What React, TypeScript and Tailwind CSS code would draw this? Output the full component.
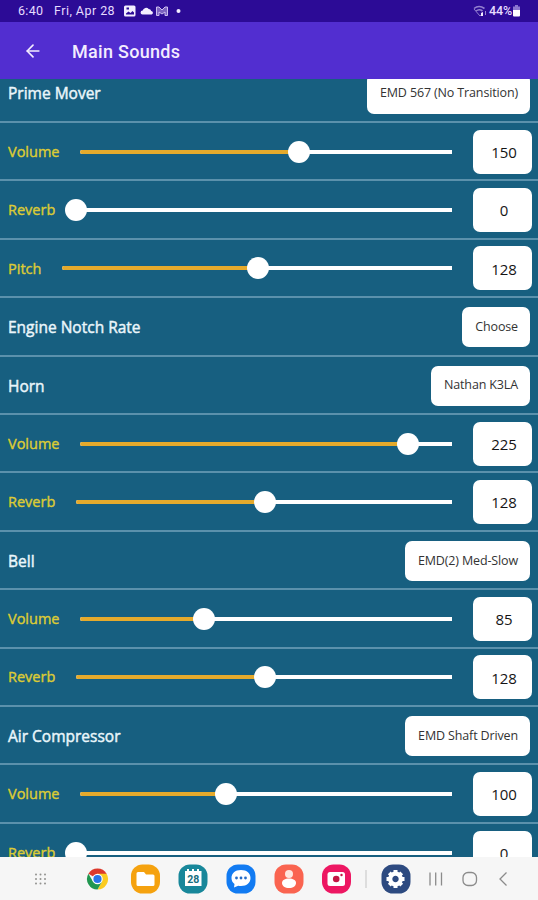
import { LuArrowLeft } from "react-icons/lu"

type Row =
  | { kind: "choice"; label: string; value: string }
  | { kind: "slider"; label: "Volume" | "Reverb" | "Pitch"; value: number }

const rows: Row[] = [
  { kind: "choice", label: "Prime Mover", value: "EMD 567 (No Transition)" },
  { kind: "slider", label: "Volume", value: 150 },
  { kind: "slider", label: "Reverb", value: 0 },
  { kind: "slider", label: "Pitch", value: 128 },
  { kind: "choice", label: "Engine Notch Rate", value: "Choose" },
  { kind: "choice", label: "Horn", value: "Nathan K3LA" },
  { kind: "slider", label: "Volume", value: 225 },
  { kind: "slider", label: "Reverb", value: 128 },
  { kind: "choice", label: "Bell", value: "EMD(2) Med-Slow" },
  { kind: "slider", label: "Volume", value: 85 },
  { kind: "slider", label: "Reverb", value: 128 },
  { kind: "choice", label: "Air Compressor", value: "EMD Shaft Driven" },
  { kind: "slider", label: "Volume", value: 100 },
  { kind: "slider", label: "Reverb", value: 0 },
]

const labelWidths = {
  Volume: "w-[72px]",
  Reverb: "w-[68px]",
  Pitch: "w-[54px]",
}

function ChoiceRow({ label, value }: { label: string; value: string }) {
  return (
    <div className="flex h-[58.43px] shrink-0 items-center justify-between border-b-2 border-[#5b91ac] px-2 pt-[2px]">
      <span className="pt-px text-[15.5px] text-[#eaf6fb] [-webkit-text-stroke:0.45px]">{label}</span>
      <button className="h-10 rounded-[7px] bg-white pr-3 pl-[13.3px] text-[12.5px] tracking-[-0.14px] text-[#333]">{value}</button>
    </div>
  )
}

function SliderRow({ label, value }: { label: keyof typeof labelWidths; value: number }) {
  const percent = (value / 255) * 100
  return (
    <div className="flex h-[58.43px] shrink-0 items-center border-b-2 border-[#5b91ac] pt-px pl-2 pr-1.5">
      <span className={`shrink-0 text-[14.5px] text-[#dccb35] [-webkit-text-stroke:0.4px] ${labelWidths[label]}`}>
        {label}
      </span>
      <div className="relative h-1 flex-1 rounded-r-[1px] rounded-l-full bg-white">
        <div className="h-1 rounded-full bg-[#e5aa2c]" style={{ width: `${percent}%` }} />
        <div
          className="absolute -top-[9px] size-[22px] -translate-x-1/2 rounded-full bg-white"
          style={{ left: `${percent}%` }}
        />
      </div>
      <div className="ml-[21px] flex h-11 w-[59px] items-center justify-center rounded-[7px] bg-white pt-px pl-[3px] text-[15px] text-[#151515]">
        {value}
      </div>
    </div>
  )
}

function StatusBar() {
  return (
    <div className="flex h-[22px] shrink-0 items-center bg-[#2c0b96] pl-[18px] pr-[17px] font-['Roboto',sans-serif] text-[12.5px] text-[#e6dcff]">
      <span className="w-9 pt-px tracking-[0.3px]">6:40</span>
      <span className="w-[70px] whitespace-nowrap pt-px tracking-[0.45px]">Fri, Apr 28</span>
      <svg width="60" height="12" viewBox="0 0 60 12" fill="#f3edff">
        <path fillRule="evenodd" d="M1.500 0.500h8.500a1.500 1.500 0 0 1 1.500 1.500v8a1.500 1.500 0 0 1-1.500 1.500H1.500A1.500 1.500 0 0 1 0 10V2A1.500 1.500 0 0 1 1.500 .5ZM2 9.500h8V7.500L8.500 6 6.500 8 4.500 6.500 2 8.500ZM2.500 2.500v2H5v-2Z" />
        <path d="M18.500 9.500a2 2 0 0 1 .2-4 3.500 3.500 0 0 1 6-1.500 2.600 2.600 0 0 1 2.500 2 1.800 1.800 0 0 1 .5 3.500Z" />
        <path d="M32.500 2v8.500h2.500V7l3 2 3-2v3.500h2.500V2H41l-3 3-3-3Z" fill="#7c63c0" stroke="#cdbff0" strokeWidth="1" />
        <circle cx="54.500" cy="6" r="2" />
      </svg>
      <svg className="ml-auto" width="14" height="12" viewBox="0 0 14 12" fill="none" stroke="#9480d0">
        <path d="M1 3.500Q6 -.5 11.500 3.500M3 6q3.200-2.600 6.500 0" strokeWidth="1.600" />
        <path d="M1 4l6 7 2-2" />
        <path d="M8 8l2-1v4H8Z" fill="#f3edff" stroke="none" />
        <path d="M12.500 6v4" />
      </svg>
      <span className="ml-[2px] pt-px font-medium tracking-[-0.1px]">44%</span>
      <svg width="9" height="12" viewBox="0 0 9 12">
        <path d="M3 0h3v1.500h2v4H1v-4h2Z" fill="#8c76cf" />
        <path d="M1 5h7v5.500a1 1 0 0 1-1 1H2a1 1 0 0 1-1-1Z" fill="#fff" />
      </svg>
    </div>
  )
}

function Dock() {
  return (
    <nav className="h-[43px] shrink-0 bg-[#f6f6f6]">
      <svg width="538" height="43" viewBox="0 857 538 43">
        <g fill="#92928f">
          <circle cx="36" cy="874.500" r="1" /><circle cx="40.500" cy="874.500" r="1" /><circle cx="45" cy="874.500" r="1" />
          <circle cx="36" cy="879" r="1" /><circle cx="40.500" cy="879" r="1" /><circle cx="45" cy="879" r="1" />
          <circle cx="36" cy="883.500" r="1" /><circle cx="40.500" cy="883.500" r="1" /><circle cx="45" cy="883.500" r="1" />
        </g>
        {/* browser */}
        <g transform="translate(97.500 879)">
          <path d="M0 0L-9.100-5.250A10.500 10.500 0 0 1 9.100-5.250Z" fill="#dc392c" />
          <path d="M0-5.250H9.100A10.500 10.500 0 0 1 0 10.500L4.550 2.600Z" fill="#fbcb20" />
          <path d="M-9.100-5.250A10.500 10.500 0 0 0 0 10.500L4.550 2.600 0 0-4.550 2.600Z" fill="#219750" />
          <circle r="5.250" fill="#fff" />
          <circle r="4.100" fill="#2875e8" />
        </g>
        {/* files */}
        <rect x="131" y="864.500" width="29" height="29" rx="11.500" fill="#f5a20f" />
        <path d="M138 872h6l2 2.500h7q1.500 0 1.500 1.500v8.500q0 1.500-1.500 1.500h-15q-1.500 0-1.500-1.500v-11q0-1.500 1.500-1.500Z" fill="#fff" />
        {/* calendar */}
        <rect x="178.500" y="864.500" width="29" height="29" rx="11.500" fill="#18879a" />
        <path d="M185 871h2v-2h2v2h3v-2h2v2h3v-2h2v2h2.500v15h-16.500Z" fill="#fff" />
        <text x="193.200" y="882.500" textAnchor="middle" fontSize="10.500" fontWeight="700" fontFamily="Roboto, sans-serif" fill="#176f80">28</text>
        {/* messages */}
        <rect x="226.500" y="864.500" width="29" height="29" rx="11.500" fill="#127bf2" />
        <path d="M241 870c6 0 9.500 3.500 9.500 8s-3.500 8-9.500 8q-1.500 0-2.800-.3L234 887.500l.5-3.500c-2-1.500-3-3.500-3-6 0-4.500 3.500-8 9.500-8Z" fill="#fff" />
        <g fill="#266cc7"><circle cx="236.500" cy="878" r="1.400" /><circle cx="241" cy="878" r="1.400" /><circle cx="245.500" cy="878" r="1.400" /></g>
        {/* contacts */}
        <rect x="274.500" y="864.500" width="29" height="29" rx="11.500" fill="#fa6450" />
        <circle cx="289" cy="874" r="4" fill="#ffe7df" />
        <path d="M282 883c0-3 3-4.500 7-4.500s7 1.500 7 4.500-3 5-7 5-7-2-7-5Z" fill="#fff" />
        {/* camera */}
        <rect x="322" y="864.500" width="29" height="29" rx="11.500" fill="#ed1762" />
        <rect x="327.500" y="872" width="17.500" height="14" rx="2.500" fill="#fff" />
        <circle cx="336.200" cy="879" r="3.300" fill="#c31643" />
        <circle cx="341.500" cy="875" r="1.200" fill="#c31643" />
        <path d="M366 870v18" stroke="#dddddd" strokeWidth="2" />
        {/* settings */}
        <rect x="381.500" y="864.500" width="29" height="29" rx="11.500" fill="#2d4a80" />
        <g transform="translate(395.500 879)">
          <circle r="5.300" fill="none" stroke="#fff" strokeWidth="4.200" />
          <path d="M0-9V-6M0 6v3M-9 0H-6M6 0h3M-6.200-6.200l2 2M4.200 4.200l2 2M-6.200 6.200l2-2M4.200-4.200l2-2" stroke="#fff" strokeWidth="4" />
        </g>
        <g fill="none" stroke="#8b8b8b" strokeWidth="1.300">
          <path d="M430 872.500v13M435.700 872.500v13M441.500 872.500v13" />
          <rect x="463" y="872.500" width="13.500" height="13" rx="5" />
          <path d="M506.500 872.500l-6.500 6.500 6.500 6.500" />
        </g>
      </svg>
    </nav>
  )
}

export default function App() {
  return (
    <main className="flex h-[900px] w-[538px] flex-col overflow-hidden bg-[#175f80] font-['Open_Sans','Noto_Sans',sans-serif]">
      <StatusBar />
      <header className="flex h-[57px] shrink-0 items-center bg-[#522ed0] pl-[23px] font-['Roboto',sans-serif] text-[#f3edff]">
        <LuArrowLeft size={20} />
        <h1 className="ml-[29px] pt-px text-[18px] font-medium tracking-[0.3px]">Main Sounds</h1>
      </header>
      <div className="flex min-h-0 flex-1 flex-col overflow-hidden">
        <div className="-mt-[14.6px] flex flex-col">
          {rows.map((row, i) =>
            row.kind === "choice" ? (
              <ChoiceRow key={i} label={row.label} value={row.value} />
            ) : (
              <SliderRow key={i} label={row.label} value={row.value} />
            )
          )}
        </div>
      </div>
      <Dock />
    </main>
  )
}
